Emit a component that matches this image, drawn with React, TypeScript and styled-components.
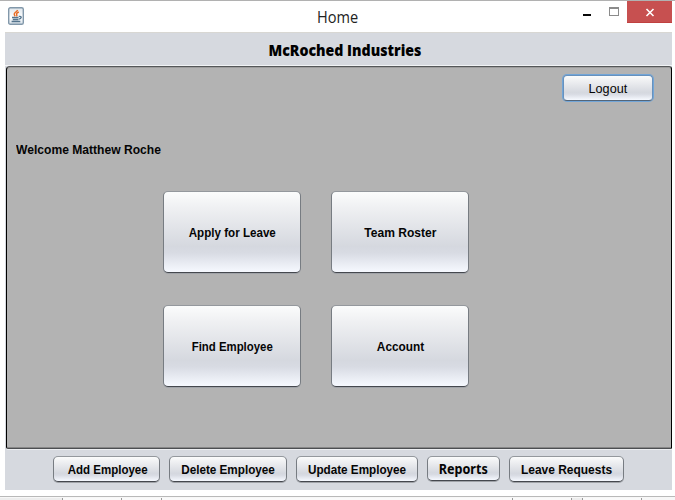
import React from "react";
import styled, { createGlobalStyle } from "styled-components";

const GlobalStyle = createGlobalStyle`
  *, *::before, *::after { box-sizing: border-box; }
  body { margin: 0; background: #fff; overflow: hidden; }
  button { margin: 0; padding: 0; font: inherit; color: inherit; }
`;

const Screen = styled.div`
  width: 675px;
  height: 500px;
  display: flex;
  flex-direction: column;
  background: #fff;
  border-top: 1px solid #b1b1b1;
  color: #050505;
  font-family: "Liberation Sans", Arial, sans-serif;
`;

const TitleBar = styled.header`
  height: 31px;
  flex: none;
  display: grid;
  grid-template-columns: 1fr auto 1fr;
  align-items: start;
  padding: 0 3px 0 8px;
`;

const AppIcon = styled.svg`
  display: block;
  margin-top: 6px;
`;

const WindowTitle = styled.h1<{ $scale: number }>`
  margin: 5px 4px 0 0;
  font: 400 16px/22px "Open Sans", "Noto Sans", sans-serif;
  color: #222;
  transform: scaleX(${(p) => p.$scale});
`;

const WindowControls = styled.div`
  display: flex;
  justify-content: flex-end;
`;

const ControlButton = styled.button<{ $width: number; $close?: boolean }>`
  width: ${(p) => p.$width}px;
  height: 22px;
  border: 0;
  background: ${(p) => (p.$close ? "#c75050" : "transparent")};
  border-bottom: ${(p) => (p.$close ? "1px solid #c0403f" : "0")};
`;

const ControlGlyph = styled.svg`
  display: block;
`;

const Frame = styled.main`
  width: 667px;
  height: 458px;
  flex: none;
  margin-left: 5px;
  display: flex;
  flex-direction: column;
  background: #d6d9df;
`;

const Banner = styled.div`
  height: 34px;
  flex: none;
  display: flex;
  justify-content: center;
  align-items: center;
  padding: 1px 0 0 12px;
  border-top: 1px solid #d8d7d3;
  border-bottom: 1px solid #f1f3f5;
`;

const BannerText = styled.h2<{ $scale: number }>`
  margin: 0;
  font: 800 15px/20px "Open Sans", "Noto Sans", sans-serif;
  color: #000;
  white-space: nowrap;
  transform: scaleX(${(p) => p.$scale});
`;

const Content = styled.section`
  width: 666px;
  height: 383px;
  flex: none;
  margin-left: 1px;
  border: 1px solid #000;
  border-top-color: #555759;
  border-bottom-color: #4c4e51;
  border-radius: 4px 3px 1px 2px;
  background: #b3b3b3;
  box-shadow: inset 0 1px #9d9d9d, inset 0 -1px #878787, 0 1px #eceef1;
`;

const AccountBar = styled.div`
  display: flex;
  justify-content: flex-end;
  padding: 7px 18px 0 0;
`;

const Welcome = styled.p`
  margin: 38px 0 0 9px;
  height: 20px;
  line-height: 20px;
`;

const Label = styled.span<{ $scale: number; $regular?: boolean; $shift?: number }>`
  display: inline-block;
  font-size: 13px;
  font-weight: ${(p) => (p.$regular ? 400 : 700)};
  white-space: nowrap;
  transform: translateX(${(p) => p.$shift ?? 0}px) scaleX(${(p) => p.$scale});
`;

const WelcomeLabel = styled(Label)`
  transform-origin: left center;
`;

const ActionGrid = styled.div`
  display: grid;
  grid-template-columns: 138px 138px;
  grid-template-rows: 82px 82px;
  column-gap: 30px;
  row-gap: 32px;
  margin: 32px 0 0 156px;
`;

const Button = styled.button`
  display: flex;
  align-items: center;
  justify-content: center;
  border: 1px solid #777c82;
  border-top-color: #94989d;
  border-bottom-color: #45484e;
  border-radius: 5px;
  background: linear-gradient(#fbfcfc 0, #f0f1f3 18%, #d5d8df 68%, #d8dbe3 76%, #f6f9ff 100%);
  box-shadow: 0 1px #a0a3a8;
`;

const ActionButton = styled(Button)`
  padding-top: 1px;
`;

const LogoutButton = styled(Button)`
  width: 90px;
  height: 26px;
  margin-top: 1px;
  padding-top: 1px;
  border-color: #6791bd;
  border-bottom-color: #536579;
  border-radius: 4px;
  box-shadow: 0 0 0 1px #72a5d7;
`;

const BottomBar = styled.nav`
  display: flex;
  gap: 9px;
  padding: 7px 0 0 48px;
`;

const BottomButton = styled(Button)<{ $width: number; $height?: number }>`
  width: ${(p) => p.$width}px;
  height: ${(p) => p.$height ?? 26}px;
`;

const ReportsLabel = styled(Label)`
  font-family: "Noto Sans", "Open Sans", sans-serif;
  font-size: 14px;
  line-height: 18px;
`;

const LowerEdge = styled.footer`
  height: 4px;
  margin-top: auto;
  display: flex;
  border-top: 1px solid #b9b9b9;
  padding-top: 1px;
  background: #f7f7f7;
`;

const EdgeCell = styled.i<{ $width: number; $dim?: boolean }>`
  width: ${(p) => p.$width}px;
  border-right: 1px solid #9a9a9a;
  background: ${(p) => (p.$dim ? "#ededed" : "#fafafa")};
`;

const actions = [
  { text: "Apply for Leave", scale: 0.893, shift: 0.5 },
  { text: "Team Roster", scale: 0.928, shift: 0.5 },
  { text: "Find Employee", scale: 0.877, shift: 0 },
  { text: "Account", scale: 0.91, shift: 0.5 },
];

const edges = [
  { width: 63, dim: true },
  { width: 59 },
  { width: 40 },
  { width: 351 },
  { width: 59 },
  { width: 11, dim: true },
  { width: 59 },
];

function JavaIcon() {
  return (
    <AppIcon width="16" height="18" viewBox="0 0 16 18">
      <defs>
        <linearGradient id="tile" x1="0" y1="0" x2="0" y2="1">
          <stop offset="0" stopColor="#dfe6ec" />
          <stop offset="0.6" stopColor="#fff" />
          <stop offset="1" stopColor="#d4dee7" />
        </linearGradient>
      </defs>
      <rect x="0.7" y="0.7" width="14.6" height="16.6" rx="1.6" fill="url(#tile)" stroke="#8298aa" strokeWidth="1.4" />
      <path d="M9.6 3Q9 4.5 7 5.7Q5.4 7 7.2 9.2M10.8 5Q8 6.3 8.6 7.5Q9.5 8.3 8.2 9.2" fill="none" stroke="#e86b24" strokeWidth="1.4" />
      <path d="M4 10.5H10.5M4.8 12.5H10.4M3.6 14.5H12.3M10.8 9.5C14.5 8.8 13.6 11.8 10.8 12.2" fill="none" stroke="#54748d" strokeWidth="1.3" />
    </AppIcon>
  );
}

export default function App() {
  return (
    <>
      <GlobalStyle />
      <Screen>
        <TitleBar>
          <JavaIcon />
          <WindowTitle $scale={0.91}>Home</WindowTitle>
          <WindowControls>
            <ControlButton $width={28} aria-label="Minimize">
              <ControlGlyph width="28" height="22" shapeRendering="crispEdges">
                <rect x="11" y="13" width="8" height="2" fill="#080808" />
              </ControlGlyph>
            </ControlButton>
            <ControlButton $width={27} aria-label="Maximize">
              <ControlGlyph width="27" height="22" shapeRendering="crispEdges">
                <path d="M9.5 7V14.5H18.5V7M9 7H19" fill="none" stroke="#8b8b8b" />
                <rect x="9" y="6" width="10" height="2" fill="#8b8b8b" />
              </ControlGlyph>
            </ControlButton>
            <ControlButton $width={45} $close aria-label="Close">
              <ControlGlyph width="45" height="21">
                <path d="M19.5 8L26.5 15M26.5 8L19.5 15" stroke="#fff" strokeWidth="1.6" />
              </ControlGlyph>
            </ControlButton>
          </WindowControls>
        </TitleBar>
        <Frame>
          <Banner>
            <BannerText $scale={0.945}>McRoched Industries</BannerText>
          </Banner>
          <Content>
            <AccountBar>
              <LogoutButton>
                <Label $regular $scale={0.97}>Logout</Label>
              </LogoutButton>
            </AccountBar>
            <Welcome>
              <WelcomeLabel $scale={0.93}>Welcome Matthew Roche</WelcomeLabel>
            </Welcome>
            <ActionGrid>
              {actions.map((action) => (
                <ActionButton key={action.text}>
                  <Label $scale={action.scale} $shift={action.shift}>{action.text}</Label>
                </ActionButton>
              ))}
            </ActionGrid>
          </Content>
          <BottomBar>
            <BottomButton $width={107}>
              <Label $scale={0.886} $shift={1.5}>Add Employee</Label>
            </BottomButton>
            <BottomButton $width={118}>
              <Label $scale={0.9}>Delete Employee</Label>
            </BottomButton>
            <BottomButton $width={122}>
              <Label $scale={0.9} $shift={0.5}>Update Employee</Label>
            </BottomButton>
            <BottomButton $width={73} $height={25}>
              <ReportsLabel $scale={0.9}>Reports</ReportsLabel>
            </BottomButton>
            <BottomButton $width={115}>
              <Label $scale={0.92}>Leave Requests</Label>
            </BottomButton>
          </BottomBar>
        </Frame>
        <LowerEdge>
          {edges.map((edge, index) => (
            <EdgeCell key={index} $width={edge.width} $dim={edge.dim} />
          ))}
        </LowerEdge>
      </Screen>
    </>
  );
}
